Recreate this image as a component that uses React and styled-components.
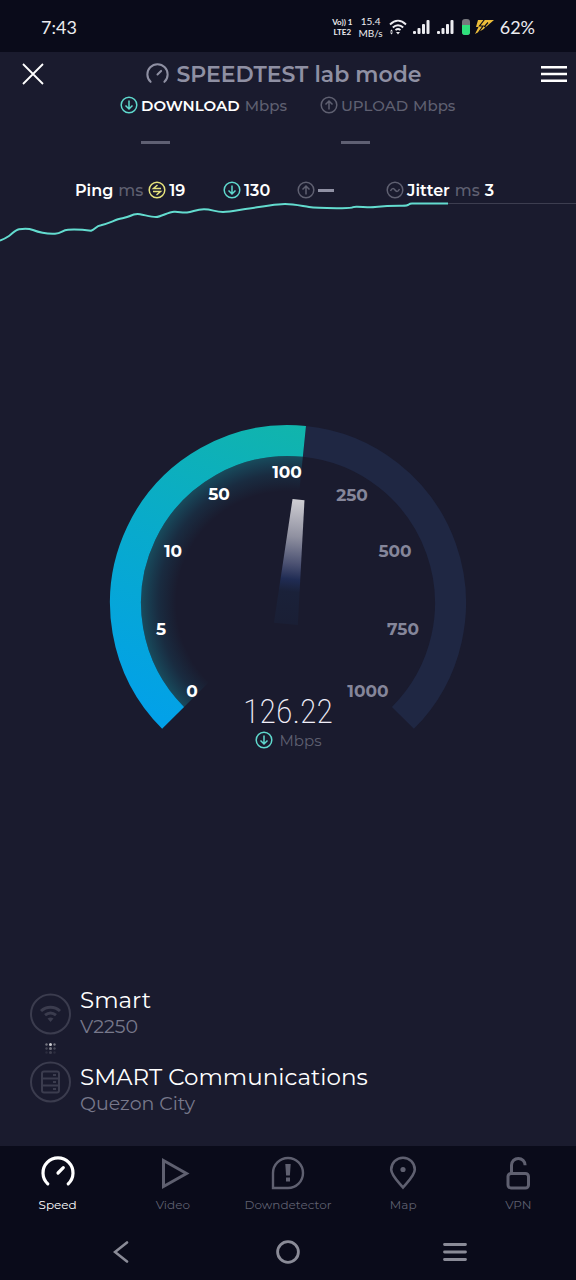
import React from "react";
import styled, { createGlobalStyle } from "styled-components";

const GlobalStyle = createGlobalStyle`
  * {
    box-sizing: border-box;
  }
  body {
    margin: 0;
    background: #1a1b2e;
    font-family: Montserrat, Inter, "Noto Sans", sans-serif;
  }
  button {
    border: 0;
    padding: 0;
    background: none;
    color: inherit;
    font: inherit;
    cursor: pointer;
  }
  svg {
    display: block;
    flex-shrink: 0;
  }
`;

const Screen = styled.div`
  min-height: 100vh;
  display: flex;
  flex-direction: column;
  background: #1a1b2e;
  color: #fff;
`;

const StatusBar = styled.div`
  height: 52px;
  padding: 2px 41px 0;
  display: flex;
  align-items: center;
  justify-content: space-between;
  background: #0a0b1a;
  color: #ececf0;
  font-family: Lato, "Noto Sans", sans-serif;
  font-size: 18px;
`;

const StatusIcons = styled.div`
  display: flex;
  align-items: center;
  gap: 6px;
`;

const TinyStack = styled.span`
  display: flex;
  flex-direction: column;
  align-items: center;
  font-size: ${({ $size }) => $size}px;
  line-height: ${({ $line }) => $line}px;
  font-weight: ${({ $weight }) => $weight || 400};
  white-space: nowrap;
`;

const Header = styled.header`
  height: 44px;
  padding-right: 9px;
  display: grid;
  grid-template-columns: 1fr auto 1fr;
  align-items: center;
`;

const CloseButton = styled.button`
  justify-self: start;
  padding-left: 22px;
`;

const MenuButton = styled.button`
  justify-self: end;
`;

const Title = styled.h1`
  margin: 0;
  display: flex;
  align-items: center;
  gap: 8px;
  font-size: 22px;
  font-weight: 600;
  color: #8f90a3;
`;

const Results = styled.section`
  height: 84px;
  display: grid;
  grid-template-columns: 200px 136px;
  justify-content: center;
`;

const ResultLabel = styled.div`
  height: 18px;
  display: flex;
  align-items: center;
  gap: 3px;
  font-size: 15px;
  font-weight: ${({ $active }) => ($active ? 600 : 500)};
  color: ${({ $active }) => ($active ? "#fff" : "#5f6071")};
  white-space: nowrap;
`;

const Unit = styled.span`
  margin: 0 2px;
  font-weight: 500;
  color: #5f6071;
`;

const Dash = styled.div`
  width: ${({ $width }) => $width}px;
  height: 3px;
  background: ${({ $color }) => $color || "#5f6073"};
`;

const ResultDash = styled(Dash)`
  margin: 27px 0 0 21px;
`;

const Stats = styled.section`
  height: 20px;
  display: grid;
  grid-template-columns: 148px 74px 89px 110px;
  justify-content: center;
  margin-right: 5px;
`;

const Stat = styled.div`
  display: flex;
  align-items: center;
  gap: 3px;
  font-size: 16px;
  font-weight: 600;
  white-space: nowrap;
`;

const ChartArea = styled.svg`
  width: 100%;
  height: 44px;
`;

const GaugeArea = styled.main`
  flex: 1;
  padding-bottom: 54px;
  display: grid;
  place-content: center;
`;

const Dial = styled.svg`
  grid-area: 1 / 1;
  width: 62.5vw;
  max-width: 480px;
  height: auto;

  text {
    font-size: 17px;
    font-weight: 700;
    text-anchor: middle;
  }
`;

const Readout = styled.div`
  grid-area: 1 / 1;
  align-self: end;
  justify-self: center;
  display: flex;
  flex-direction: column;
  align-items: center;
`;

const Speed = styled.div`
  font-family: "Roboto Condensed", "Liberation Sans Narrow", Roboto, sans-serif;
  font-size: 34px;
  font-weight: 200;
  line-height: 36px;
  color: #f0eef8;
`;

const SpeedUnit = styled.div`
  height: 22px;
  margin-bottom: 2px;
  display: flex;
  align-items: center;
  gap: 7px;
  font-size: 15px;
  color: #5f6071;
`;

const Network = styled.section`
  padding: 0 30px 29px;
  display: flex;
  gap: 9px;
`;

const NetworkIcons = styled.div`
  padding-top: 7px;
  display: flex;
  flex-direction: column;
`;

const NetworkNames = styled.div`
  display: flex;
  flex-direction: column;
  gap: 23px;
`;

const NetworkName = styled.div`
  font-size: 23px;
  line-height: 28px;
`;

const NetworkDetail = styled.div`
  font-size: 19px;
  line-height: 26px;
  color: #77788b;
`;

const TabBar = styled.nav`
  padding: 10px 0 11px;
  display: grid;
  grid-template-columns: repeat(5, 1fr);
  background: #0a0b1a;
`;

const Tab = styled.a`
  display: flex;
  flex-direction: column;
  align-items: center;
  gap: 6px;
  font-size: 12px;
  line-height: 18px;
  text-decoration: none;
  color: ${({ $active }) => ($active ? "#fff" : "#5f6070")};
`;

const SystemNav = styled.div`
  height: 55px;
  padding: 0 38px 2px;
  display: grid;
  grid-template-columns: repeat(3, 1fr);
  place-items: center;
  background: #0a0b1a;
  color: #8a8b97;
`;

const ARROWS = {
  down: "M9 4.5v8.5M5.5 9.5L9 13l3.5-3.5",
  up: "M9 13.5V5M5.5 8.5L9 5l3.5 3.5",
  ping: "M13 7.5H5.5L9.5 4M5 10.5H12.5L8.5 14",
  jitter: "M4.5 10c1.5-3 3-3 4.5-1s3 2 4.5-1",
};

const RoundIcon = ({ type, color }) => (
  <svg
    width="18"
    height="18"
    viewBox="0 0 18 18"
    fill="none"
    stroke={color}
    strokeWidth="1.5"
  >
    <circle cx="9" cy="9" r="7.8" />
    <path d={ARROWS[type]} />
  </svg>
);

const SpeedIcon = ({ size, stroke }) => (
  <svg
    width={size}
    height={size}
    viewBox="0 0 34 34"
    fill="none"
    stroke="currentColor"
    strokeWidth={stroke}
    strokeLinecap="round"
  >
    <path d="M6.8 27.8A15 15 0 1 1 27.2 27.8M17 17l5.3-5.3" />
  </svg>
);

const SignalIcon = () => (
  <svg width="18" height="16" viewBox="0 0 18 16" fill="currentColor">
    <rect x="0" y="12" width="3" height="3" rx="1" />
    <rect x="4.5" y="9" width="3" height="6" rx="1" />
    <rect x="9" y="5" width="3" height="10" rx="1" />
    <rect x="13.5" y="1" width="3" height="14" rx="1" />
  </svg>
);

// the dial is drawn around 0,0 and angles run clockwise from the top
const point = (angle, r) => {
  const a = (angle * Math.PI) / 180;
  return `${r * Math.sin(a)} ${-r * Math.cos(a)}`;
};

const arc = (from, to, r) =>
  `M${point(from, r)}A${r} ${r} 0 ${to - from > 180 ? 1 : 0} 1 ${point(to, r)}`;

const NEEDLE = 5.8;

const TICKS = [
  { label: "0", x: -96, y: 88 },
  { label: "5", x: -127, y: 26 },
  { label: "10", x: -115, y: -52 },
  { label: "50", x: -69, y: -109 },
  { label: "100", x: -1, y: -131 },
  { label: "250", x: 64, y: -108, off: true },
  { label: "500", x: 107, y: -52, off: true },
  { label: "750", x: 115, y: 26, off: true },
  { label: "1000", x: 80, y: 88, off: true },
];

const Gauge = () => (
  <Dial viewBox="-180 -180 360 330">
    <defs>
      <linearGradient
        id="arc"
        gradientUnits="userSpaceOnUse"
        x1="-100"
        y1="126"
        x2="20"
        y2="-178"
      >
        <stop offset="0" stopColor="#02a1e8" />
        <stop offset="0.5" stopColor="#08aacd" />
        <stop offset="1" stopColor="#11b5ab" />
      </linearGradient>
      <radialGradient id="glow" gradientUnits="userSpaceOnUse" cx="0" cy="0" r="147">
        <stop offset="0.76" stopColor="#148fae" stopOpacity="0" />
        <stop offset="0.88" stopColor="#148fae" stopOpacity="0.14" />
        <stop offset="1" stopColor="#14a0ae" stopOpacity="0.36" />
      </radialGradient>
      <linearGradient
        id="needle"
        gradientUnits="userSpaceOnUse"
        x1="0"
        y1="-104"
        x2="0"
        y2="21"
      >
        <stop offset="0" stopColor="#cfced3" />
        <stop offset="0.3" stopColor="#8f90a0" />
        <stop offset="0.52" stopColor="#4a5071" />
        <stop offset="0.64" stopColor="#202c54" />
        <stop offset="0.74" stopColor="#1a2139" />
        <stop offset="1" stopColor="#1a1f35" />
      </linearGradient>
    </defs>
    <g fill="none">
      <path d={arc(NEEDLE, 135, 162.5)} stroke="#1f2743" strokeWidth="31" />
      <path d={arc(-135, NEEDLE, 126)} stroke="url(#glow)" strokeWidth="42" />
      <path d={arc(-135, NEEDLE, 162.5)} stroke="url(#arc)" strokeWidth="31" />
    </g>
    <path
      d="M-6-104H6L12 21H-12Z"
      fill="url(#needle)"
      transform={`rotate(${NEEDLE})`}
    />
    {TICKS.map(({ label, x, y, off }) => (
      <text key={label} x={x} y={y + 6} fill={off ? "#85869a" : "#fff"}>
        {label}
      </text>
    ))}
  </Dial>
);

const SpeedChart = () => (
  <ChartArea viewBox="0 0 576 44" preserveAspectRatio="none" fill="none">
    <path d="M448 3.5H576" stroke="#3d3e50" />
    <path
      d="M0 40.7C4 39 6 38 9 36S15 30 19 29.3S28 28 33 30S48 34 55 33.7S62 30 68 29.7S82 29.5 91 30.7C95 29.5 96 26 101 25.3C108 23.5 113 21 118 19.3C123 18 127 17.5 130 16S135 13.5 140 14.3S151 17 156 17S168 12 174 11.7S181 13 187 12.5S196 9.3 204 9.3S215 12 223 12S243 9 257 7.3S276 4 285 4S302 6 309 7S322 8 340 8.2S350 6.5 357 6.7S370 7.5 375 7S393 5.7 402 5.8S407 3.5 412 3.5H448"
      stroke="#63dccf"
      strokeWidth="2"
    />
  </ChartArea>
);

const tabs = [
  { label: "Speed", icon: <SpeedIcon size={34} stroke={3.2} />, active: true },
  {
    label: "Video",
    icon: (
      <svg width="34" height="34" viewBox="0 0 34 34" fill="none" stroke="currentColor" strokeWidth="3">
        <path d="M7.5 4.5v26L30.500 17.5Z" />
      </svg>
    ),
  },
  {
    label: "Downdetector",
    icon: (
      <svg width="34" height="34" viewBox="0 0 34 34" fill="none" stroke="currentColor" strokeWidth="2.4">
        <path d="M2 32V17A15 15 0 1 1 17 32Z" />
        <path d="M14.3 8h5.4l-.8 11.5h-3.8ZM15 21.5h4v4h-4Z" fill="currentColor" stroke="none" />
      </svg>
    ),
  },
  {
    label: "Map",
    icon: (
      <svg width="34" height="34" viewBox="0 0 34 34" fill="none" stroke="currentColor" strokeWidth="2.6">
        <path d="M17 31.5C13 26.5 5.2 19.5 5.2 13.5a11.8 11.8 0 0 1 23.6 0C28.8 19.5 21 26.5 17 31.5Z" />
        <circle cx="17" cy="13.5" r="2.6" fill="currentColor" stroke="none" />
      </svg>
    ),
  },
  {
    label: "VPN",
    icon: (
      <svg width="34" height="34" viewBox="0 0 34 34" fill="none" stroke="currentColor" strokeWidth="3">
        <rect x="7" y="17.5" width="20.5" height="14.5" rx="3" />
        <path d="M10.5 17V9.2a6.8 6.8 0 0 1 13.600 0" />
      </svg>
    ),
  },
];

const App = () => {
  return (
    <Screen>
      <GlobalStyle />
      <StatusBar>
        <span>7:43</span>
        <StatusIcons>
          <TinyStack $size={8} $line={10} $weight={700}>
            <span>Vo)) 1</span>
            <span>LTE2</span>
          </TinyStack>
          <TinyStack $size={10} $line={12}>
            <span>15.4</span>
            <span>MB/s</span>
          </TinyStack>
          <svg width="18" height="16" viewBox="0 0 18 16" fill="none" stroke="currentColor" strokeWidth="1.8">
            <path d="M1 5.5C6 .5 12 .5 17 5.5M3.8 8.5c3-3 7.4-3 10.4 0M6.5 11.2c1.5-1.4 3.5-1.4 5 0" />
            <path d="M9 15.5l-2-2.5h4ZM1 12.5l1.5-2 1.5 2ZM1 13.5h3l-1.5 2Z" fill="currentColor" stroke="none" />
          </svg>
          <SignalIcon />
          <SignalIcon />
          <svg width="33" height="18" viewBox="0 0 33 18">
            <rect x="1" y="1" width="8" height="16" rx="3" fill="#77777d" />
            <path d="M1 7h8v7a3 3 0 0 1-3 3H4a3 3 0 0 1-3-3Z" fill="#2fe07c" />
            <path d="M17 2H33L22 11.5L14 16L17.5 9H15Z" fill="#ecbd3a" />
            <path d="M23.5 1.5L18.5 8H22L17.5 14.5M27 4.5L23.5 8.5L25 9.5" stroke="#0a0b1a" strokeWidth="1.2" fill="none" />
          </svg>
          <span>62%</span>
        </StatusIcons>
      </StatusBar>

      <Header>
        <CloseButton aria-label="Close">
          <svg width="22" height="22" viewBox="0 0 22 22" stroke="currentColor" strokeWidth="1.8">
            <path d="M1 1l20 20M21 1L1 21" />
          </svg>
        </CloseButton>
        <Title>
          <SpeedIcon size={23} stroke={3} />
          SPEEDTEST lab mode
        </Title>
        <MenuButton aria-label="Menu">
          <svg width="26" height="18" viewBox="0 0 26 18" stroke="currentColor" strokeWidth="2.6">
            <path d="M0 2.3h26M0 9h26M0 15.7h26" />
          </svg>
        </MenuButton>
      </Header>

      <Results>
        <div>
          <ResultLabel $active>
            <RoundIcon type="down" color="#5fd9cd" />
            DOWNLOAD <Unit>Mbps</Unit>
          </ResultLabel>
          <ResultDash $width={29} />
        </div>
        <div>
          <ResultLabel>
            <RoundIcon type="up" color="#5f6071" />
            UPLOAD <Unit>Mbps</Unit>
          </ResultLabel>
          <ResultDash $width={29} />
        </div>
      </Results>

      <Stats>
        <Stat>
          Ping <Unit>ms</Unit>
          <RoundIcon type="ping" color="#e6e37c" />
          19
        </Stat>
        <Stat>
          <RoundIcon type="down" color="#5fd9cd" />
          130
        </Stat>
        <Stat>
          <RoundIcon type="up" color="#5f6071" />
          <Dash $width={16} $color="#8f90a3" />
        </Stat>
        <Stat>
          <RoundIcon type="jitter" color="#5f6071" />
          Jitter <Unit>ms</Unit> 3
        </Stat>
      </Stats>
      <SpeedChart />

      <GaugeArea>
        <Gauge />
        <Readout>
          <Speed>126.22</Speed>
          <SpeedUnit>
            <RoundIcon type="down" color="#5fd9cd" />
            Mbps
          </SpeedUnit>
        </Readout>
      </GaugeArea>

      <Network>
        <NetworkIcons>
          <svg width="41" height="42" viewBox="0 0 41 42" fill="none" stroke="#3b3c4e" strokeWidth="2">
            <circle cx="20.5" cy="21" r="19.5" />
            <path d="M11 18c5.5-5 13.5-5 19 0M15 22.2c3.4-2.7 7.6-2.7 11 0" strokeWidth="3" />
            <path d="M20.5 29l-3-3.5c2-1.4 4-1.4 6 0Z" fill="#3b3c4e" stroke="none" />
          </svg>
          <svg width="41" height="26" viewBox="0 0 41 26">
            {[0, 1, 2].map((row) =>
              [0, 1, 2].map((col) => (
                <circle
                  key={`${row}${col}`}
                  cx={16.5 + col * 4}
                  cy={9.5 + row * 4}
                  r={col === 1 ? 1.5 : 1.2}
                  fill="#fff"
                  opacity={(col === 1 ? 0.8 : 0.4) / (row * row + 1)}
                />
              ))
            )}
          </svg>
          <svg width="41" height="42" viewBox="0 0 41 42" fill="none" stroke="#3b3c4e" strokeWidth="2">
            <circle cx="20.5" cy="21" r="19.5" />
            <rect x="12" y="10.5" width="17" height="21" rx="2" />
            <path d="M12 17.5h17M12 24.5h17M23 14h3M23 21h3M23 28h3" />
          </svg>
        </NetworkIcons>
        <NetworkNames>
          <div>
            <NetworkName>Smart</NetworkName>
            <NetworkDetail>V2250</NetworkDetail>
          </div>
          <div>
            <NetworkName>SMART Communications</NetworkName>
            <NetworkDetail>Quezon City</NetworkDetail>
          </div>
        </NetworkNames>
      </Network>

      <TabBar>
        {tabs.map(({ label, icon, active }) => (
          <Tab key={label} href="#" $active={active}>
            {icon}
            {label}
          </Tab>
        ))}
      </TabBar>
      <SystemNav>
        <button aria-label="Back">
          <svg width="16" height="22" viewBox="0 0 16 22" fill="none" stroke="currentColor" strokeWidth="2.6" strokeLinecap="round">
            <path d="M14 1.5L2 11l12 9.5" />
          </svg>
        </button>
        <button aria-label="Home">
          <svg width="24" height="24" viewBox="0 0 24 24" fill="none" stroke="currentColor" strokeWidth="2.8">
            <circle cx="12" cy="12" r="10.4" />
          </svg>
        </button>
        <button aria-label="Recent apps">
          <svg width="24" height="20" viewBox="0 0 24 20" stroke="currentColor" strokeWidth="2.8" strokeLinecap="round">
            <path d="M1.5 2.5h21M1.5 10h21M1.5 17.5h21" />
          </svg>
        </button>
      </SystemNav>
    </Screen>
  );
};

export default App;
